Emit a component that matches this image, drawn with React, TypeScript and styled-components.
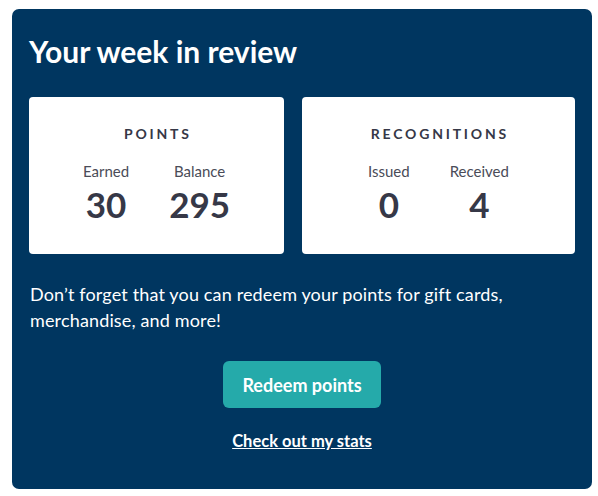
import styled, { createGlobalStyle } from "styled-components";

const GlobalStyle = createGlobalStyle`
    body {
        margin: 0;
        background: #ffffff;
        font-family: Lato, "Noto Sans", sans-serif;
    }
`;

interface Stat {
    label: string;
    value: number;
}

interface Summary {
    title: string;
    grow: number;
    stats: Stat[];
}

const summaries: Summary[] = [
    { title: "Points", grow: 255, stats: [{ label: "Earned", value: 30 }, { label: "Balance", value: 295 }] },
    { title: "Recognitions", grow: 273, stats: [{ label: "Issued", value: 0 }, { label: "Received", value: 4 }] },
];

const App = () => {
    return (
        <Page>
            <GlobalStyle />
            <Panel>
                <Heading>Your week in review</Heading>
                <CardRow>
                    {summaries.map((summary) => (
                        <Card key={summary.title} grow={summary.grow}>
                            <CardTitle>{summary.title}</CardTitle>
                            <StatRow>
                                {summary.stats.map((stat) => (
                                    <StatColumn key={stat.label}>
                                        <StatLabel>{stat.label}</StatLabel>
                                        <StatValue>{stat.value}</StatValue>
                                    </StatColumn>
                                ))}
                            </StatRow>
                        </Card>
                    ))}
                </CardRow>
                <Message>
                    Don’t forget that you can redeem your points for gift cards, merchandise, and more!
                </Message>
                <Actions>
                    <RedeemButton>Redeem points</RedeemButton>
                    <StatsLink href="#">Check out my stats</StatsLink>
                </Actions>
            </Panel>
        </Page>
    );
};

export default App;

const Page = styled.div`
    padding: 9px 6px 7px 12px;
`;

const Panel = styled.div`
    width: 580px;
    height: 480px;
    box-sizing: border-box;
    background-color: #003660;
    border-radius: 7px;
    padding: 24px 17px 0 17px;
    color: #ffffff;
`;

const Heading = styled.h1`
    margin: 0 0 28px 0;
    font-size: 30px;
    line-height: 36px;
    font-weight: 700;
`;

const CardRow = styled.div`
    display: flex;
    gap: 18px;
`;

interface CardProps {
    grow: number;
}

const Card = styled.div<CardProps>`
    flex: ${(props) => props.grow} 1 0;
    height: 157px;
    box-sizing: border-box;
    background: #ffffff;
    border-radius: 4px;
    padding-top: 28px;
    display: flex;
    flex-direction: column;
    align-items: center;
    color: #363847;
`;

const CardTitle = styled.div`
    font-size: 14px;
    line-height: 18px;
    font-weight: 700;
    text-transform: uppercase;
    letter-spacing: 2.8px;
    margin-right: -2.8px;
`;

const StatRow = styled.div`
    display: flex;
    gap: 40px;
    margin-top: 19px;
`;

const StatColumn = styled.div`
    display: flex;
    flex-direction: column;
    align-items: center;
`;

const StatLabel = styled.div`
    font-size: 15px;
    line-height: 18px;
    color: #4a4c58;
`;

const StatValue = styled.div`
    margin-top: 5px;
    font-size: 35px;
    line-height: 38px;
    font-weight: 700;
    color: #363847;
`;

const Message = styled.p`
    margin: 27px 0 0 1px;
    font-size: 18px;
    line-height: 26px;
    letter-spacing: 0.15px;
`;

const Actions = styled.div`
    display: flex;
    flex-direction: column;
    align-items: center;
    margin-top: 28px;
`;

const RedeemButton = styled.button`
    width: 158px;
    height: 47px;
    border: none;
    border-radius: 6px;
    background-color: #25aaaa;
    color: #ffffff;
    font-family: inherit;
    font-size: 18px;
    font-weight: 700;
    cursor: pointer;
`;

const StatsLink = styled.a`
    margin-top: 23px;
    color: #ffffff;
    font-size: 16.5px;
    line-height: 20px;
    font-weight: 700;
    text-decoration: underline;
`;
